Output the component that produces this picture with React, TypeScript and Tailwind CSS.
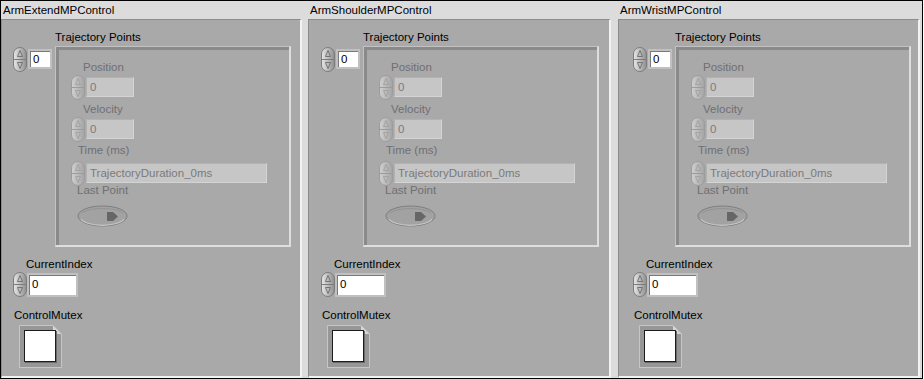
import React from "react";

const font = "font-['Liberation_Sans',Arial,sans-serif]";

function Spinner({ disabled = false }: { disabled?: boolean }) {
  const id = disabled ? "spinGd" : "spinG";
  const stroke = disabled ? "#9c9c9c" : "#7c7c7c";
  const arrow = disabled ? "#a0a0a0" : "#6c6c6c";
  return (
    <svg width="14" height="25" viewBox="0 0 14 25" className="shrink-0">
      <defs>
        <linearGradient id={id} x1="0" x2="1" y1="0" y2="0">
          <stop offset="0" stopColor={disabled ? "#d0d0d0" : "#e8e8e8"} />
          <stop offset="1" stopColor={disabled ? "#a4a4a4" : "#8e8e8e"} />
        </linearGradient>
      </defs>
      <rect x="0.5" y="0.5" width="13" height="24" rx="6.5" fill={`url(#${id})`} stroke={stroke} />
      <line x1="1" y1="12.5" x2="13" y2="12.5" stroke={stroke} />
      <path d="M7 3.5 L9.5 9.5 L4.5 9.5 Z" fill="none" stroke={arrow} strokeWidth="0.9" />
      <path d="M7 21.5 L9.5 15.5 L4.5 15.5 Z" fill="none" stroke={arrow} strokeWidth="0.9" />
    </svg>
  );
}

function Label({ text, disabled = false, className = "" }: { text: string; disabled?: boolean; className?: string }) {
  return (
    <div className={`h-[14px] leading-[14px] text-[11.5px] whitespace-nowrap ${disabled ? "text-[#6f6f74]" : "text-black"} ${className}`}>
      {text}
    </div>
  );
}

function DisabledField({ value, width }: { value: string; width: string }) {
  // row is as tall as the box; the spinner hangs over above and below
  return (
    <div className="flex items-center h-[20px]">
      <Spinner disabled />
      <div
        className={`${width} h-[20px] ml-[1px] bg-[#c6c6c6] border-t border-l border-[#b2b2b2] border-r border-b border-r-[#d4d4d4] border-b-[#d4d4d4] pl-[3px] leading-[18px] text-[11.5px] text-[#7a7a7a] whitespace-nowrap`}
      >
        {value}
      </div>
    </div>
  );
}

function Toggle() {
  return (
    <svg width="51" height="22" viewBox="0 0 51 22">
      <ellipse cx="25.5" cy="11" rx="24.5" ry="10" fill="#a2a2a2" stroke="#7e7e7e" />
      <path d="M4 14 A22 8 0 0 0 47 14" fill="none" stroke="#c6c6c6" strokeWidth="1.2" />
      <path d="M5 8 A22 7 0 0 1 46 8" fill="none" stroke="#939393" strokeWidth="1" />
      <path d="M30 7 L36 7 L41 11.5 L36 16 L30 16 Z" fill="#666666" />
    </svg>
  );
}

function Refnum() {
  return (
    <svg width="43" height="43" viewBox="0 0 43 43">
      <path d="M0.5 0.5 H34 L42.5 9 V42.5 H0.5 Z" fill="#979797" stroke="#c6c6c6" />
      <path d="M34 0.5 L42.5 9 L34 9 Z" fill="#d6d6d6" />
      <rect x="5.5" y="5.5" width="31" height="31" fill="#ffffff" stroke="#1c1c1c" />
      <line x1="37.5" y1="6" x2="37.5" y2="38" stroke="#6a6a6a" />
      <line x1="6" y1="37.5" x2="38" y2="37.5" stroke="#6a6a6a" />
    </svg>
  );
}

function WhiteBox({ w, h, value }: { w: string; h: string; value: string }) {
  return (
    <div className={`${w} ${h} border-2 border-[#c0c0c0] bg-white`}>
      <div className="w-full h-full border-t border-l border-[#7a7a7a] pl-[2px] flex items-center text-[11.5px] text-black">
        {value}
      </div>
    </div>
  );
}

function Cluster({
  title,
  width,
  className = "",
  inset = "",
}: {
  title: string;
  width: string;
  className?: string;
  inset?: string;
}) {
  return (
    <div className={`${width} h-full flex flex-col ${className}`}>
      <div className="h-[18px] pl-[2px] leading-[18px] text-[11.5px] text-black whitespace-nowrap">{title}</div>
      <div className={`flex-1 bg-[#a9a9a9] border-t border-l border-[#8c8c8c] border-r-2 border-b-2 border-r-[#f2f2f2] border-b-[#f2f2f2] pt-[10px] ${inset}`}>
        <Label text="Trajectory Points" className="pl-[53px]" />
        <div className="flex mt-[2px] pl-[11px]">
          {/* array index */}
          <div className="flex items-start mt-[1px]">
            <Spinner />
            <div className="mt-[2px] ml-[1px]">
              <WhiteBox w="w-[24px]" h="h-[20px]" value="0" />
            </div>
          </div>
          {/* array frame */}
          <div className="ml-[3px] w-[236px] h-[201px] border-t border-l border-[#c2c2c2] border-r-2 border-b-2 border-r-[#dedede] border-b-[#dedede]">
            <div className="w-full h-full border-t-[3px] border-l-[3px] border-[#8a8a8a] flex flex-col">
              <Label text="Position" disabled className="ml-[24px] mt-[10px]" />
              <div className="mt-[3px] ml-[12px]">
                <DisabledField value="0" width="w-[48px]" />
              </div>
              <Label text="Velocity" disabled className="ml-[24px] mt-[5px]" />
              <div className="mt-[3px] ml-[12px]">
                <DisabledField value="0" width="w-[48px]" />
              </div>
              <Label text="Time (ms)" disabled className="ml-[19px] mt-[4px]" />
              <div className="mt-[6px] ml-[12px]">
                <DisabledField value="TrajectoryDuration_0ms" width="w-[181px]" />
              </div>
              <Label text="Last Point" disabled className="ml-[18px]" />
              <div className="mt-[8px] ml-[18px]">
                <Toggle />
              </div>
            </div>
          </div>
        </div>
        <Label text="CurrentIndex" className="ml-[24px] mt-[10px]" />
        <div className="flex items-center mt-[1px] ml-[11px]">
          <Spinner />
          <WhiteBox w="w-[51px]" h="h-[24px]" value="0" />
        </div>
        <Label text="ControlMutex" className="ml-[12px] mt-[11px]" />
        <div className="mt-[3px] ml-[17px]">
          <Refnum />
        </div>
      </div>
    </div>
  );
}

export default function App() {
  return (
    <div className={`w-[924px] h-[379px] bg-white ${font}`}>
      <div className="w-[923px] h-[379px] border border-black bg-[#dcdcdc] flex">
        <Cluster title="ArmExtendMPControl" width="w-[301px]" />
        <Cluster title="ArmShoulderMPControl" width="w-[303px]" className="ml-[6px]" inset="pl-[1px]" />
        <Cluster title="ArmWristMPControl" width="w-[302px]" className="ml-[7px]" inset="pl-[3px]" />
      </div>
    </div>
  );
}
